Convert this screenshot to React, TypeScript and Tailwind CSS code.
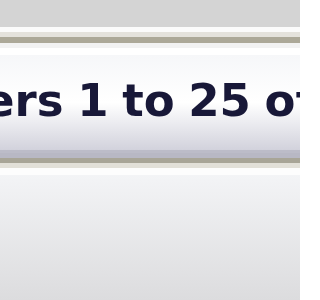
import React from "react";

export default function App() {
  return (
    <div className="w-[300px] h-[300px] overflow-hidden flex flex-col bg-white">
      <div className="h-[27px] bg-[#d4d4d4]" />
      <div className="h-[5px] bg-[#fbfbfb]" />
      <div className="h-[5px] bg-[#e4e2dc]" />
      <div className="h-[6px] bg-[#aca898]" />
      <div className="h-[5px] bg-[#f2f2f2]" />
      <div className="h-[7px] bg-white" />
      <div className="h-[95px] bg-gradient-to-b from-[#f6f7f9] via-[#ffffff] via-50% to-[#d2d2dc] flex items-end pb-[27px] overflow-hidden">
        <div
          className="whitespace-nowrap -ml-[16px] text-[45px] leading-none font-bold tracking-[0px] [word-spacing:-2px] text-[#181838] blur-[0.5px]"
          style={{ fontFamily: '"DejaVu Sans", Verdana, sans-serif' }}
        >
          ers 1 to 25 of
        </div>
      </div>
      <div className="h-[3px] bg-[#bcbcc8]" />
      <div className="h-[5px] bg-[#b8b8c4]" />
      <div className="h-[5px] bg-[#a8a597]" />
      <div className="h-[5px] bg-[#e2e0d8]" />
      <div className="h-[7px] bg-[#fdfdfd]" />
      <div className="flex-1 bg-gradient-to-b from-[#f3f4f6] to-[#dcdcde]" />
    </div>
  );
}
